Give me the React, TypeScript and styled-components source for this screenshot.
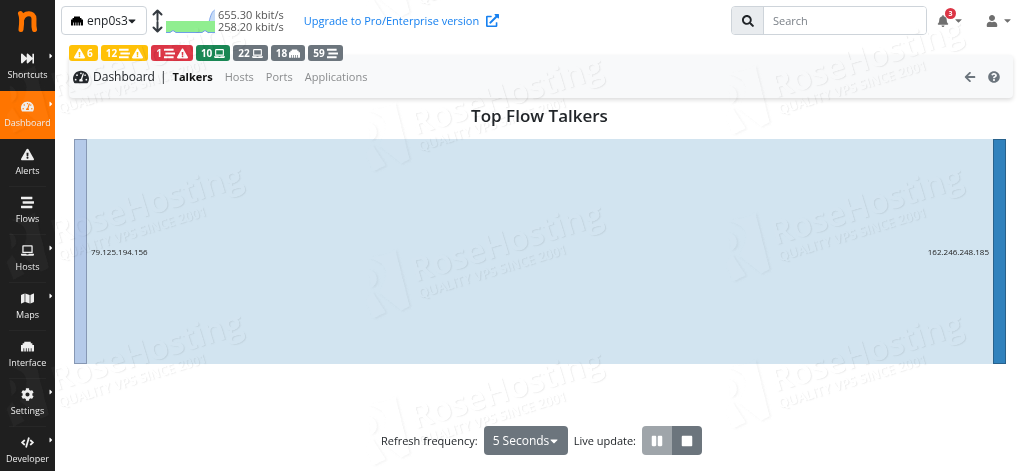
import React from "react";
import styled, { createGlobalStyle, css } from "styled-components";
import {
  FaArrowLeft,
  FaBell,
  FaCaretDown,
  FaCaretRight,
  FaCode,
  FaCog,
  FaEthernet,
  FaExclamationTriangle,
  FaExternalLinkAlt,
  FaFastForward,
  FaLaptop,
  FaMap,
  FaPause,
  FaQuestionCircle,
  FaSearch,
  FaStop,
  FaStream,
  FaTachometerAlt,
  FaUser,
} from "react-icons/fa";

const GlobalStyle = createGlobalStyle`
  * { box-sizing: border-box; }
  body {
    margin: 0;
    background: #fff;
    color: #212529;
    font-family: "Open Sans", "Noto Sans", sans-serif;
    font-size: 12px;
    line-height: 16px;
  }
  button, input, select { font: inherit; color: inherit; }
  a { text-decoration: none; }
`;

const Page = styled.div`
  position: relative;
  display: flex;
  min-height: 100vh;
  overflow: hidden;
`;

const Sidebar = styled.nav`
  flex: none;
  width: 55px;
  background: #1f1f1f;
`;

const Brand = styled.a`
  display: flex;
  justify-content: center;
  height: 43px;
  padding-top: 10px;
`;

const MenuList = styled.ul`
  list-style: none;
  margin: 0;
  padding: 0;
`;

const MenuLink = styled.a<{ $active?: boolean }>`
  position: relative;
  display: flex;
  flex-direction: column;
  align-items: center;
  gap: 4px;
  height: 48px;
  padding-top: 9px;
  font-size: 9px;
  line-height: 12px;
  color: #eee;
  background: ${(p) => (p.$active ? "#ff7500" : "transparent")};
  > svg { width: auto; height: 13px; }
`;

const MenuArrow = styled(FaCaretRight)`
  && {
    position: absolute;
    top: 9px;
    right: 1px;
    width: 6px;
    height: 8px;
    color: #fff;
  }
`;

const Divider = styled.li`
  height: 1px;
  margin: -1px 9px 0;
  background: #272727;
`;

const Main = styled.main`
  flex: 1;
  min-width: 0;
`;

const TopBar = styled.header`
  display: flex;
  align-items: center;
  height: 41px;
  padding: 0 11px 0 6px;
`;

const SelectWrap = styled.div<{ $solid?: boolean }>`
  position: relative;
  display: inline-flex;
  align-items: center;
  height: 29px;
  border-radius: 4px;
  ${(p) =>
    p.$solid
      ? css`background: #6c757d; color: #fff;`
      : css`border: 1px solid #ced4da; color: #212529;`}
  > svg { position: absolute; pointer-events: none; }
  > svg:last-child { right: 8px; }
  > svg:first-child:not(:last-child) { left: 9px; }
`;

const Select = styled.select<{ $icon?: boolean }>`
  appearance: none;
  height: 100%;
  border: 0;
  background: transparent;
  padding: 0 18px 0 ${(p) => (p.$icon ? 25 : 9)}px;
`;

const Traffic = styled.div`
  display: flex;
  align-items: center;
  gap: 3px;
  margin-left: 5px;
  font-size: 11px;
  line-height: 12px;
  color: #555;
`;

const UpgradeLink = styled.a`
  display: flex;
  align-items: center;
  gap: 7px;
  margin-left: 20px;
  font-size: 11px;
  color: #1680f0;
`;

const SearchBox = styled.label`
  display: flex;
  width: 196px;
  height: 29px;
  margin-left: auto;
  border: 1px solid #ced4da;
  border-radius: 4px;
  overflow: hidden;
`;

const SearchIcon = styled.span`
  display: flex;
  align-items: center;
  justify-content: center;
  width: 32px;
  background: #e9ecef;
  border-right: 1px solid #ced4da;
`;

const SearchInput = styled.input`
  flex: 1;
  min-width: 0;
  border: 0;
  padding: 0 9px;
  font-size: 11px;
  &::placeholder { color: #7b8188; opacity: 1; }
`;

const IconButton = styled.button<{ $color?: string }>`
  position: relative;
  display: flex;
  align-items: center;
  gap: 4px;
  padding: 0;
  border: 0;
  background: transparent;
  color: ${(p) => p.$color ?? "#6f6f6f"};
`;

const UserArea = styled.div`
  display: flex;
  align-items: center;
  gap: 22px;
  margin-left: 10px;
`;

const Count = styled.span`
  position: absolute;
  top: -7px;
  left: 8px;
  width: 11px;
  height: 11px;
  border-radius: 6px;
  background: #dc3545;
  color: #fff;
  font-size: 7px;
  font-weight: 700;
  line-height: 11px;
  text-align: center;
`;

const Badges = styled.div`
  position: relative;
  display: flex;
  gap: 3px;
  margin: 4px 0 -6px 14px;
`;

const Badge = styled.a<{ $bg: string }>`
  display: flex;
  align-items: center;
  gap: 2px;
  height: 16px;
  padding: 0 5px;
  border-radius: 3px;
  background: ${(p) => p.$bg};
  color: #fff;
  font-size: 10px;
  font-weight: 700;
  line-height: 16px;
  svg { width: auto; height: 11px; }
`;

const SubNav = styled.nav`
  display: flex;
  align-items: center;
  height: 43px;
  margin: 0 11px 0 14px;
  padding: 0 13px 0 4px;
  border-radius: 4px;
  background: #f8f9fa;
  box-shadow: 0 2px 4px rgba(0, 0, 0, 0.14);
`;

const SectionTitle = styled.span`
  display: flex;
  align-items: center;
  gap: 4px;
  margin-right: 5px;
`;

const Tab = styled.a<{ $active?: boolean }>`
  margin-left: ${(p) => (p.$active ? 6 : 12)}px;
  color: ${(p) => (p.$active ? "#111" : "#8a8c8e")};
  font-weight: ${(p) => (p.$active ? 700 : 400)};
  font-size: 11px;
`;

const NavActions = styled.div`
  display: flex;
  gap: 12px;
  margin-left: auto;
`;

const Heading = styled.h1`
  margin: 6px 0 11px;
  font-size: 17px;
  font-weight: 600;
  line-height: 24px;
  text-align: center;
`;

const Chart = styled.div`
  display: flex;
  height: 225px;
  margin: 0 18px 0 19px;
`;

const Node = styled.div<{ $fill: string; $stroke: string }>`
  width: 13px;
  background: ${(p) => p.$fill};
  border: 1px solid ${(p) => p.$stroke};
`;

const Ribbon = styled.div`
  flex: 1;
  display: flex;
  align-items: center;
  justify-content: space-between;
  padding: 0 4px;
  background: #d2e4f0;
  font-size: 8px;
  line-height: 12px;
  color: #222;
`;

const Controls = styled.div`
  display: flex;
  align-items: center;
  justify-content: center;
  gap: 6px;
  margin: 62px 0 16px;
  padding-left: 4px;
`;

const ControlLabel = styled.label`
  font-size: 11px;
`;

const LiveLabel = styled.span`
  font-size: 11px;
`;

const ButtonGroup = styled.div`
  display: flex;
  border-radius: 4px;
  overflow: hidden;
`;

const GroupButton = styled.button<{ $muted?: boolean }>`
  display: flex;
  align-items: center;
  justify-content: center;
  width: 30px;
  height: 29px;
  padding: 0;
  border: 0;
  color: #fff;
  background: ${(p) => (p.$muted ? "#9fa5aa" : "#6c757d")};
`;

const WatermarkLayer = styled.div`
  position: absolute;
  inset: 0;
  overflow: hidden;
  pointer-events: none;
  mix-blend-mode: hard-light;
`;

const Watermark = styled.div<{ $x: number; $y: number }>`
  position: absolute;
  left: ${(p) => p.$x}px;
  top: ${(p) => p.$y}px;
  display: flex;
  align-items: center;
  transform: rotate(-17deg);
  transform-origin: 0 100%;
  color: #838383;
  white-space: nowrap;
  text-shadow: 1px 1px 1px rgba(108, 108, 108, 0.4);
  svg {
    overflow: visible;
    filter: drop-shadow(1px 1px 1px rgba(108, 108, 108, 0.4));
  }
`;

const WatermarkName = styled.div`
  font-size: 33px;
  font-weight: 600;
  line-height: 32px;
`;

const WatermarkLine = styled.div`
  font-size: 13px;
  font-weight: 600;
  line-height: 16px;
`;

const menu = [
  { label: "Shortcuts", Icon: FaFastForward, arrow: true },
  { label: "Dashboard", Icon: FaTachometerAlt, arrow: true, active: true },
  { label: "Alerts", Icon: FaExclamationTriangle },
  { label: "Flows", Icon: FaStream },
  { label: "Hosts", Icon: FaLaptop, arrow: true },
  { label: "Maps", Icon: FaMap, arrow: true },
  { label: "Interface", Icon: FaEthernet },
  { label: "Settings", Icon: FaCog, arrow: true },
  { label: "Developer", Icon: FaCode, arrow: true },
];

const badges = [
  { bg: "#ffc107", count: "", after: "6", icons: [FaExclamationTriangle] },
  { bg: "#ffc107", count: "12", icons: [FaStream, FaExclamationTriangle] },
  { bg: "#dc3545", count: "1", icons: [FaStream, FaExclamationTriangle] },
  { bg: "#198754", count: "10", icons: [FaLaptop] },
  { bg: "#6c757d", count: "22", icons: [FaLaptop] },
  { bg: "#6c757d", count: "18", icons: [FaEthernet] },
  { bg: "#6c757d", count: "59", icons: [FaStream] },
];

const marks = [
  [29, -72], [29, 75], [29, 222], [29, 369],
  [389, -34], [389, 113], [389, 260], [389, 407],
  [749, -71], [749, 76], [749, 223], [749, 370],
];

function App() {
  return (
    <Page>
      <GlobalStyle />
      <Sidebar aria-label="Main menu">
        <Brand href="#" aria-label="Home">
          <svg width="21" height="23" viewBox="0 0 21 23" fill="none" stroke="#ff7500" strokeWidth="5" strokeLinecap="round" strokeLinejoin="round">
            <path d="M3.500 3.500C5 7 5 12 4 19.500M5 9C7 2.500 17 1.500 17 9C17 13 16.500 16 17.500 19.500" />
          </svg>
        </Brand>
        <MenuList>
          {menu.map(({ label, Icon, arrow, active }, i) => (
            <React.Fragment key={label}>
              {i > 2 && <Divider role="separator" />}
              <li>
                <MenuLink href="#" $active={active}>
                  <Icon />
                  {label}
                  {arrow && <MenuArrow />}
                </MenuLink>
              </li>
            </React.Fragment>
          ))}
        </MenuList>
      </Sidebar>

      <Main>
        <TopBar>
          <SelectWrap>
            <FaEthernet size={12} color="#000" />
            <Select $icon aria-label="Interface">
              <option>enp0s3</option>
            </Select>
            <FaCaretDown size={12} />
          </SelectWrap>
          <Traffic>
            <svg width="11" height="24" viewBox="0 0 11 24" fill="none" stroke="#343a40" strokeWidth="2" strokeLinecap="round" strokeLinejoin="round">
              <path d="M1.500 5.500L5.500 1.500L9.500 5.500M5.500 2V11M1.500 18.500L5.500 22.500L9.500 18.500M5.500 22V13" />
            </svg>
            <svg width="49" height="24" viewBox="0 0 49 24">
              <path d="M43 13C45 5 46 3 48.500 1H49V13Z" fill="#c6dbf7" />
              <path d="M43 13C45 5 46 3 48.500 1" stroke="#7fa6ee" fill="none" />
              <path d="M0 12H49V23.500H42L39 21.500L36 23.500H10L7 21.500L4 23.500H0Z" fill="#90ee90" />
              <path d="M0 23.500H4L7 21.500L10 23.500H36L39 21.500L42 23.500H49" stroke="#6f9fe8" fill="none" />
            </svg>
            <div>
              <div>655.30 kbit/s</div>
              <div>258.20 kbit/s</div>
            </div>
          </Traffic>
          <UpgradeLink href="#">
            Upgrade to Pro/Enterprise version
            <FaExternalLinkAlt size={13} />
          </UpgradeLink>
          <SearchBox>
            <SearchIcon>
              <FaSearch size={12} />
            </SearchIcon>
            <SearchInput type="search" placeholder="Search" aria-label="Search" />
          </SearchBox>
          <UserArea>
            <IconButton aria-label="Notifications">
              <FaBell size={12} />
              <FaCaretDown size={11} />
              <Count>3</Count>
            </IconButton>
            <IconButton aria-label="User">
              <FaUser size={12} />
              <FaCaretDown size={11} />
            </IconButton>
          </UserArea>
        </TopBar>

        <Badges>
          {badges.map((b, i) => (
            <Badge key={i} href="#" $bg={b.bg}>
              {b.count}
              {b.icons.map((Icon, n) => (
                <Icon key={n} />
              ))}
              {b.after}
            </Badge>
          ))}
        </Badges>

        <SubNav aria-label="Dashboard pages">
          <SectionTitle>
            <FaTachometerAlt size={16} />
            Dashboard
          </SectionTitle>
          <span>|</span>
          <Tab href="#" $active>Talkers</Tab>
          <Tab href="#">Hosts</Tab>
          <Tab href="#">Ports</Tab>
          <Tab href="#">Applications</Tab>
          <NavActions>
            <IconButton $color="#6c757d" aria-label="Back">
              <FaArrowLeft size={12} />
            </IconButton>
            <IconButton $color="#6c757d" aria-label="Help">
              <FaQuestionCircle size={12} />
            </IconButton>
          </NavActions>
        </SubNav>

        <Heading>Top Flow Talkers</Heading>

        <Chart>
          <Node $fill="#b5cae9" $stroke="#8798b4" />
          <Ribbon>
            <span>79.125.194.156</span>
            <span>162.246.248.185</span>
          </Ribbon>
          <Node $fill="#3182bd" $stroke="#28628d" />
        </Chart>

        <Controls>
          <ControlLabel htmlFor="refresh">Refresh frequency:</ControlLabel>
          <SelectWrap $solid>
            <Select id="refresh">
              <option>5 Seconds</option>
            </Select>
            <FaCaretDown size={12} />
          </SelectWrap>
          <LiveLabel id="live">Live update:</LiveLabel>
          <ButtonGroup role="group" aria-labelledby="live">
            <GroupButton $muted aria-label="Pause">
              <FaPause size={12} />
            </GroupButton>
            <GroupButton aria-label="Stop">
              <FaStop size={12} />
            </GroupButton>
          </ButtonGroup>
        </Controls>
      </Main>

      <WatermarkLayer aria-hidden="true">
        {marks.map(([x, y]) => (
          <Watermark key={`${x},${y}`} $x={x} $y={y}>
            <svg width="34" height="54" viewBox="0 0 34 54" fill="#838383">
              <g transform="rotate(17 17 27)">
                <path d="M-11 1Q4 1 15 -6L29 50L21 54L-1 36Q14 12 -3 5Z" />
                <path d="M-11 14A9 9 0 0 1 -9 31Z" />
                <path d="M-8 36L5 56L-7 62L-14 44Z" />
              </g>
            </svg>
            <div>
              <WatermarkName>RoseHosting</WatermarkName>
              <WatermarkLine>QUALITY VPS SINCE 2001</WatermarkLine>
            </div>
          </Watermark>
        ))}
      </WatermarkLayer>
    </Page>
  );
}

export default App;
